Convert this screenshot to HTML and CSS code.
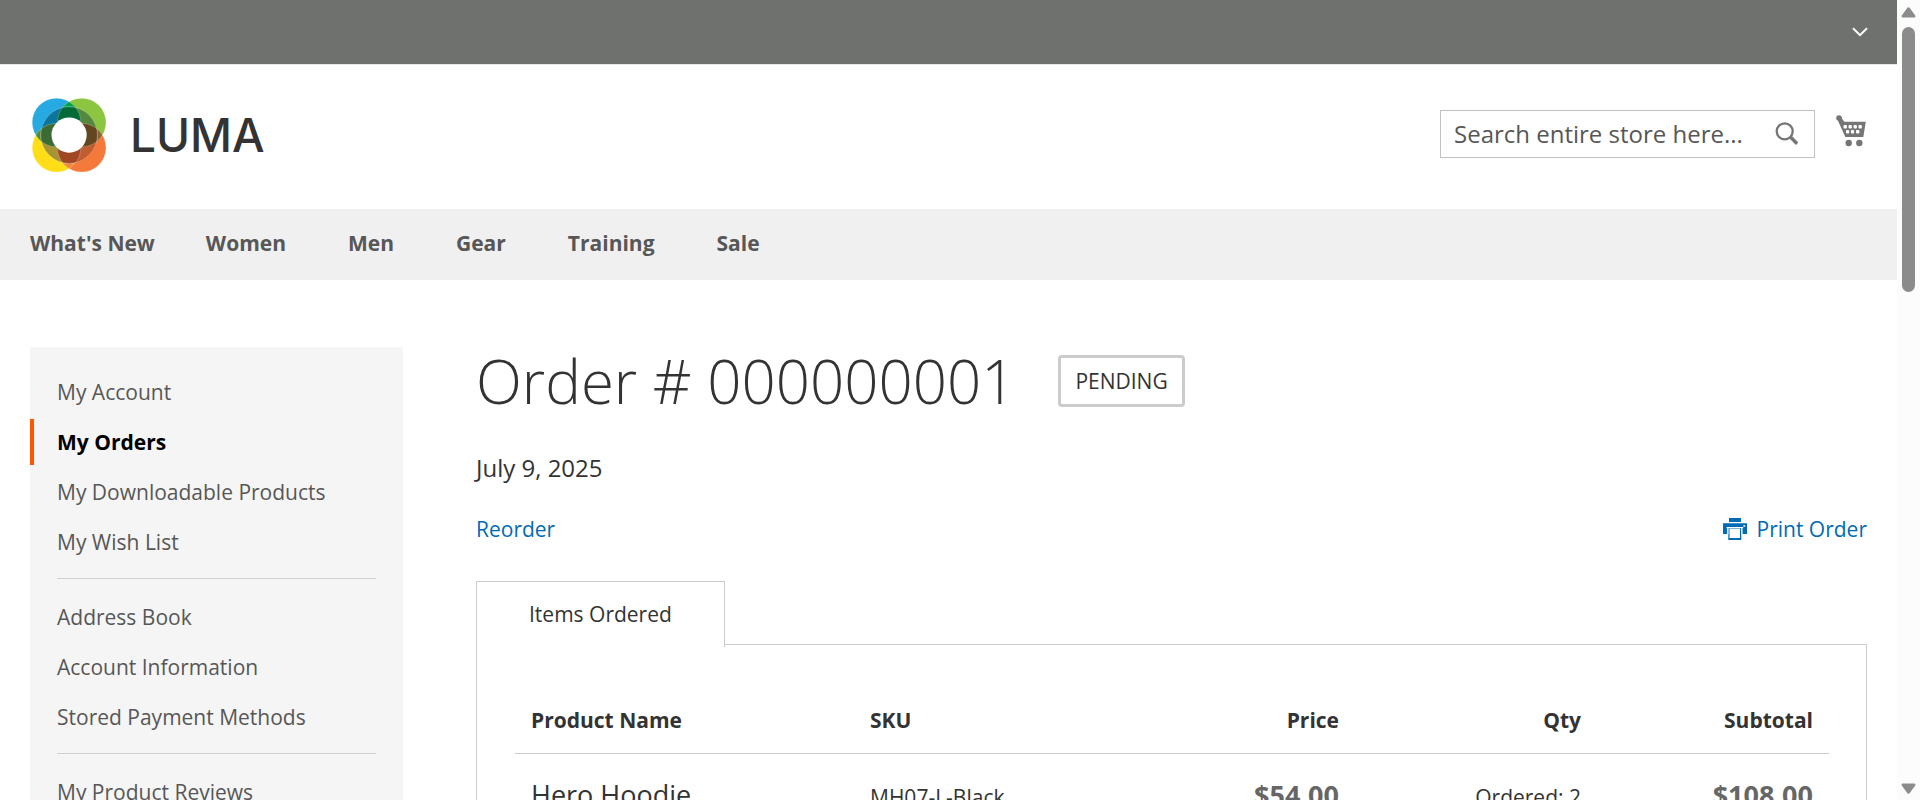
FILE: index.html
```html
<!DOCTYPE html>
<html lang="en">
<head>
<meta charset="utf-8">
<meta name="viewport" content="width=device-width, initial-scale=1">
<title>Order # 000000001</title>
<link rel="stylesheet" href="styles.css">
</head>
<body>
<div class="window">
  <div class="page">
    <header>
      <div class="panel">
        <button class="switch" type="button" aria-label="Customer menu">
          <svg width="16" height="10" viewBox="0 0 16 10"><path d="M1 1.2l7 6.9 7-6.9" fill="none" stroke="#fff" stroke-width="2"/></svg>
        </button>
      </div>
      <div class="header-content">
        <a class="logo" href="#" aria-label="Luma home">
          <svg width="74" height="74" viewBox="0 0 74 74">
            <defs>
              <clipPath id="tl"><circle cx="24.5" cy="24.5" r="24.3"/></clipPath>
              <clipPath id="tr"><circle cx="49.7" cy="24.5" r="24.3"/></clipPath>
              <clipPath id="bl"><circle cx="24.5" cy="49.7" r="24.3"/></clipPath>
              <clipPath id="br"><circle cx="49.7" cy="49.7" r="24.3"/></clipPath>
            </defs>
            <circle cx="24.5" cy="24.5" r="24.3" fill="#27a9e1"/>
            <circle cx="49.7" cy="24.5" r="24.3" fill="#8cc540"/>
            <circle cx="24.5" cy="49.7" r="24.3" fill="#ffde17"/>
            <circle cx="49.7" cy="49.7" r="24.3" fill="#f4793b"/>
            <circle cx="49.7" cy="24.5" r="24.3" fill="#00a14b" clip-path="url(#tl)"/>
            <circle cx="24.5" cy="49.7" r="24.3" fill="#4d8a3d" clip-path="url(#tl)"/>
            <circle cx="49.7" cy="49.7" r="24.3" fill="#8a6333" clip-path="url(#tr)"/>
            <circle cx="49.7" cy="49.7" r="24.3" fill="#f08a3c" clip-path="url(#bl)"/>
            <g stroke="#fff" stroke-opacity=".35" stroke-width=".6">
              <circle cx="37.1" cy="37.1" r="28.3" fill="#0b759c" clip-path="url(#tl)"/>
              <circle cx="37.1" cy="37.1" r="28.3" fill="#56873e" clip-path="url(#tr)"/>
              <circle cx="37.1" cy="37.1" r="28.3" fill="#a69434" clip-path="url(#bl)"/>
              <circle cx="37.1" cy="37.1" r="28.3" fill="#c15e30" clip-path="url(#br)"/>
              <g clip-path="url(#tl)"><circle cx="37.1" cy="37.1" r="28.3" fill="#006b37" clip-path="url(#tr)"/></g>
              <g clip-path="url(#tl)"><circle cx="37.1" cy="37.1" r="28.3" fill="#3b6b32" clip-path="url(#bl)"/></g>
              <g clip-path="url(#tr)"><circle cx="37.1" cy="37.1" r="28.3" fill="#63461f" clip-path="url(#br)"/></g>
              <g clip-path="url(#bl)"><circle cx="37.1" cy="37.1" r="28.3" fill="#a04824" clip-path="url(#br)"/></g>
              <circle cx="24.5" cy="24.5" r="24.3" fill="none"/>
              <circle cx="49.7" cy="24.5" r="24.3" fill="none"/>
              <circle cx="24.5" cy="49.7" r="24.3" fill="none"/>
              <circle cx="49.7" cy="49.7" r="24.3" fill="none"/>
            </g>
            <circle cx="37.1" cy="37.1" r="17.6" fill="#fff"/>
          </svg>
          <span class="wordmark">LUMA</span>
        </a>
        <form class="search">
          <input class="search-input" type="text" aria-label="Search" placeholder="Search entire store here...">
          <button class="search-button" type="button" aria-label="Search">
            <svg width="24" height="24" viewBox="0 0 24 24" fill="none" stroke="#757575"><circle cx="9.7" cy="9.3" r="8" stroke-width="2.3"/><path d="M15.5 15l6.6 6.7" stroke-width="3.4"/></svg>
          </button>
        </form>
        <a class="cart" href="#" aria-label="My Cart">
          <svg width="30" height="32" viewBox="0 0 30 32" fill="#757575">
            <circle cx="3" cy="3" r="2.8"/>
            <path d="M1.5 4.8L5 2.3 8.3 6.8H29.8L27.3 22H9.3z"/>
            <g fill="#fff"><rect x="7.5" y="10" width="3.4" height="3.4" rx="1"/><rect x="12.5" y="10" width="3.4" height="3.4" rx="1"/><rect x="17.5" y="10" width="3.4" height="3.4" rx="1"/><rect x="22.5" y="10" width="3.4" height="3.4" rx="1"/><rect x="10" y="15" width="3.2" height="3.6" rx="1"/><rect x="14.9" y="15" width="3.2" height="3.6" rx="1"/><rect x="20" y="15" width="3.4" height="3.6" rx="1"/></g>
            <circle cx="12.7" cy="28" r="3.2"/><circle cx="23.3" cy="28" r="3.2"/>
          </svg>
        </a>
      </div>
    </header>
    <nav class="main-nav">
      <a href="#">What's New</a>
      <a class="parent" href="#">Women</a>
      <a class="parent" href="#">Men</a>
      <a class="parent" href="#">Gear</a>
      <a class="parent" href="#">Training</a>
      <a href="#">Sale</a>
    </nav>
    <div class="columns">
      <aside class="sidebar">
        <ul class="account-nav">
          <li><a href="#">My Account</a></li>
          <li class="current"><a href="#">My Orders</a></li>
          <li><a href="#">My Downloadable Products</a></li>
          <li><a href="#">My Wish List</a></li>
          <li class="delimiter" role="separator"></li>
          <li><a href="#">Address Book</a></li>
          <li><a href="#">Account Information</a></li>
          <li><a href="#">Stored Payment Methods</a></li>
          <li class="delimiter" role="separator"></li>
          <li><a href="#">My Product Reviews</a></li>
        </ul>
      </aside>
      <main class="main">
        <div class="title-row">
          <h1>Order # 000000001</h1>
          <span class="status">PENDING</span>
        </div>
        <div class="date">July 9, 2025</div>
        <div class="actions">
          <a href="#">Reorder</a>
          <a class="print" href="#">
            <svg width="24" height="22" viewBox="0 0 24 22" fill="#006bb4"><path d="M6 0h12v4H6zM0 5.3h24V16h-4.6v-5.2h-1.1V22H5.3V10.800H4.400V16H0z"/><path d="M3.6 9h16.600v1.200H3.600zM6.500 10.800h10.500V20H6.500zM4.400 10.200h1v6h-1zM18.300 10.200h1v6h-1zM20.400 7.200h1.800v1.600h-1.800z" fill="#fff"/></svg>
            <span>Print Order</span>
          </a>
        </div>
        <div class="tabs">
          <a class="tab" href="#items">Items Ordered</a>
        </div>
        <section class="tab-panel" id="items">
          <table class="items">
            <colgroup><col class="c-name"><col class="c-sku"><col class="c-price"><col class="c-qty"><col class="c-sub"></colgroup>
            <thead>
              <tr><th scope="col">Product Name</th><th scope="col">SKU</th><th class="num" scope="col">Price</th><th class="num" scope="col">Qty</th><th class="num" scope="col">Subtotal</th></tr>
            </thead>
            <tbody>
              <tr><td class="product">Hero Hoodie</td><td>MH07-L-Black</td><td class="num price">$54.00</td><td class="num">Ordered: 2</td><td class="num price">$108.00</td></tr>
            </tbody>
          </table>
        </section>
      </main>
    </div>
  </div>
  <div class="scrollbar" aria-hidden="true">
    <svg width="15" height="11" viewBox="0 0 15 11"><path d="M6.200 .9q1.300-1.400 2.600 0l5.400 7.600q.8 2-1 2.100H1.800q-1.800-.1-1-2.100z" fill="#8b8b8b"/></svg>
    <div class="track"><div class="thumb"></div></div>
    <svg width="15" height="11" viewBox="0 0 15 11"><path d="M6.200 10.100q1.300 1.400 2.600 0l5.400-7.600q.8-2-1-2.100H1.800q-1.800.1-1 2.100z" fill="#8b8b8b"/></svg>
  </div>
</div>
</body>
</html>
```
FILE: styles.css
```css
* { box-sizing: border-box; }

body {
  margin: 0;
  background: #fff;
  color: #333;
  font: 400 21px/30px "Open Sans", "Noto Sans", sans-serif;
}

a { color: #006bb4; text-decoration: none; }
svg { display: block; flex: none; }
button { border: 0; padding: 0; background: none; cursor: pointer; }

.window { display: flex; height: 100vh; overflow: hidden; }
.page { flex: 1; min-width: 0; }

/* Header */
.panel {
  display: flex;
  align-items: center;
  justify-content: flex-end;
  height: 65px;
  padding: 0 29px;
  background: #6e716e;
  border-bottom: 1px solid #e8e8e8;
}
.header-content {
  display: flex;
  align-items: center;
  padding: 32px 30px 36px;
}
.logo {
  display: flex;
  align-items: center;
  gap: 24px;
  margin-right: auto;
  padding: 1px 0 1px 2px;
  color: #333;
}
.wordmark { font: 500 46px/54px Inter, sans-serif; }
.search {
  display: flex;
  align-items: center;
  width: 375px;
  height: 48px;
  margin-bottom: 2px;
  padding: 0 15px 0 13px;
  border: 1px solid #c2c2c2;
}
.search-input {
  flex: 1;
  min-width: 0;
  padding: 0;
  border: 0;
  outline: 0;
  background: none;
  color: #575757;
  font: inherit;
  font-size: 24px;
}
.search-input::placeholder { color: #575757; opacity: 1; }
.cart { margin: 0 1px 9px 21px; }

/* Main navigation */
.main-nav {
  display: flex;
  gap: 51px;
  padding: 19px 30px 22px;
  background: #f0f0f0;
  font-weight: 700;
}
.main-nav a { color: #575757; }
.main-nav .parent { padding-right: 11px; }

/* Page columns */
.columns {
  display: flex;
  gap: 73px;
  padding: 67px 30px 0;
}
.sidebar {
  flex: none;
  width: 373px;
  padding: 22px 0;
  background: #f5f5f5;
}
.account-nav { margin: 0; padding: 0 0 60px; list-style: none; }
.account-nav li {
  margin-bottom: 4px;
  padding: 8px 23px;
  border-left: 4px solid transparent;
}
.account-nav a { color: #575757; }
.account-nav .current { border-color: #ff5501; font-weight: 700; }
.account-nav .current a { color: #000; }
.account-nav .delimiter {
  height: 1px;
  margin: 13px 27px 15px;
  padding: 0;
  border: 0;
  background: #d1d1d1;
}

/* Order */
.main { flex: 1; min-width: 0; }
.title-row { display: flex; align-items: center; gap: 43px; padding-top: 1px; }
h1 { margin: 0; font-size: 60px; font-weight: 300; line-height: 66px; }
.status {
  padding: 8px 14px;
  border: 3px solid #ccc;
  border-radius: 4px;
}
.date { margin-top: 37px; font-size: 24px; line-height: 34px; }
.actions { display: flex; justify-content: space-between; margin-top: 29px; }
.print { display: flex; align-items: center; gap: 10px; }

/* Tabs */
.tabs { display: flex; margin-top: 37px; }
.tab {
  z-index: 1;
  margin-bottom: -3px;
  padding: 17px 52px 18px;
  border: 1px solid #ccc;
  border-bottom: 0;
  background: #fff;
  color: #333;
}
.tab-panel { padding: 45px 37px 60px 38px; border: 1px solid #ccc; }
.items { width: 100%; border-collapse: collapse; table-layout: fixed; }
.c-name { width: 339px; }
.c-price { width: 238px; }
.c-qty { width: 242px; }
.c-sub { width: 232px; }
.items th {
  padding: 15px 16px 18px;
  border-bottom: 1px solid #ccc;
  text-align: left;
}
.items td { padding: 22px 16px; vertical-align: baseline; }
.items .num { text-align: right; }
.items .product { font-size: 27px; line-height: 38px; }
.items .price { color: #666; font-size: 27px; font-weight: 700; line-height: 38px; }

/* Scrollbar */
.scrollbar {
  display: flex;
  flex: none;
  flex-direction: column;
  align-items: center;
  width: 23px;
  padding: 7px 0 6px;
  background: #fcfcfc;
}
.track { flex: 1; padding-top: 9px; }
.thumb { width: 13px; height: 35%; border-radius: 7px; background: #8b8b8b; }
```
